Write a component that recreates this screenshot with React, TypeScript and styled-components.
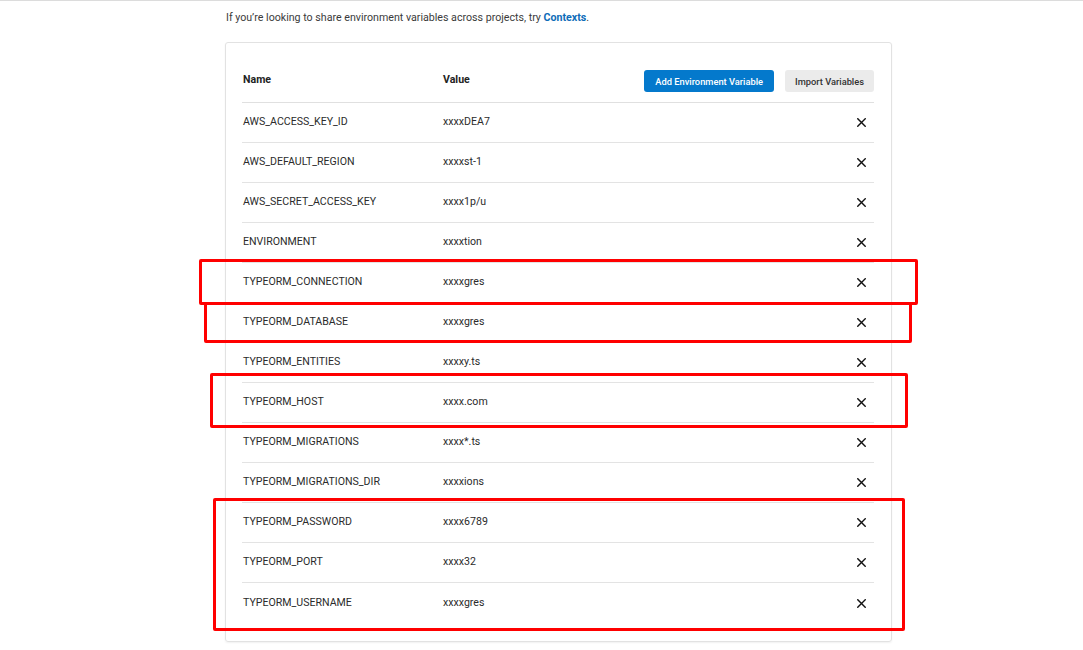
import React from "react";
import styled, { createGlobalStyle } from "styled-components";

const GlobalStyle = createGlobalStyle`
  html, body { margin: 0; padding: 0; background: #fff; }
  body { font-family: Roboto, "Liberation Sans", Arial, sans-serif; color: #333; }
  * { box-sizing: border-box; }
`;

const Page = styled.div`
  position: relative;
  width: 1083px;
  height: 650px;
  overflow: hidden;
  border-top: 1px solid #dcdcdc;
  padding-left: 225px;
`;

const Intro = styled.p`
  margin: 0;
  padding: 10px 0 0 1px;
  height: 41px;
  font-size: 10.65px;
  line-height: 14px;
  color: #3b3b3b;
`;

const Link = styled.a`
  color: #0e6cb8;
  font-weight: 700;
  text-decoration: none;
`;

const Card = styled.div`
  width: 667px;
  border: 1px solid #e2e2e2;
  border-radius: 3px;
  box-shadow: 0 1px 2px rgba(0, 0, 0, 0.06);
  padding: 27px 17px 18px 16px;
`;

const Table = styled.div`
  display: flex;
  flex-direction: column;
`;

const HeaderRow = styled.div`
  display: grid;
  grid-template-columns: 200px 1fr auto;
  align-items: center;
  height: 33px;
  padding-bottom: 11px;
  border-bottom: 1px solid #e0e0e0;
`;

const HeadCell = styled.div`
  padding-left: 1px;
  font-size: 10.6px;
  font-weight: 700;
  color: #222;
  margin-top: -4px;
`;

const Actions = styled.div`
  display: flex;
  gap: 11px;
`;

const Button = styled.button<{ $primary?: boolean }>`
  height: 22px;
  padding: 0 ${(p) => (p.$primary ? "11px" : "10px")};
  border: none;
  border-radius: 3px;
  font-family: Roboto, "Liberation Sans", Arial, sans-serif;
  font-size: 9.3px;
  font-weight: 500;
  background: ${(p) => (p.$primary ? "#0479cc" : "#ebebeb")};
  color: ${(p) => (p.$primary ? "#fff" : "#333")};
  cursor: pointer;
`;

const Row = styled.div<{ $last?: boolean }>`
  display: grid;
  grid-template-columns: 200px 1fr 24px;
  align-items: center;
  height: 40px;
  border-bottom: ${(p) => (p.$last ? "none" : "1px solid #e3e3e3")};
`;

const Cell = styled.div`
  padding-left: 1px;
  padding-bottom: 2px;
  font-size: 10.6px;
  color: #2b2b2b;
`;

const Remove = styled.div`
  display: flex;
  justify-content: center;
  align-items: center;
  padding-top: 0;
  padding-right: 1px;
`;

const Mark = styled.div`
  position: absolute;
  border: 3px solid #ff0000;
  border-radius: 2px;
  pointer-events: none;
`;

const rows: [string, string][] = [
  ["AWS_ACCESS_KEY_ID", "xxxxDEA7"],
  ["AWS_DEFAULT_REGION", "xxxxst-1"],
  ["AWS_SECRET_ACCESS_KEY", "xxxx1p/u"],
  ["ENVIRONMENT", "xxxxtion"],
  ["TYPEORM_CONNECTION", "xxxxgres"],
  ["TYPEORM_DATABASE", "xxxxgres"],
  ["TYPEORM_ENTITIES", "xxxxy.ts"],
  ["TYPEORM_HOST", "xxxx.com"],
  ["TYPEORM_MIGRATIONS", "xxxx*.ts"],
  ["TYPEORM_MIGRATIONS_DIR", "xxxxions"],
  ["TYPEORM_PASSWORD", "xxxx6789"],
  ["TYPEORM_PORT", "xxxx32"],
  ["TYPEORM_USERNAME", "xxxxgres"],
];

const marks = [
  { left: 199, top: 258, width: 719, height: 46 },
  { left: 204, top: 301, width: 708, height: 41 },
  { left: 210, top: 372, width: 698, height: 55 },
  { left: 213, top: 497, width: 692, height: 133 },
];

const CloseIcon = () => (
  <svg width="9" height="9" viewBox="0 0 9 9">
    <path d="M0.8 0.8 L8.2 8.2 M8.2 0.8 L0.8 8.2" stroke="#111" strokeWidth="1.4" strokeLinecap="square" />
  </svg>
);

export default function App() {
  return (
    <>
      <GlobalStyle />
      <Page>
        <Intro>
          If you’re looking to share environment variables across projects, try{" "}
          <Link href="#">Contexts</Link>.
        </Intro>
        <Card>
          <Table>
            <HeaderRow>
              <HeadCell>Name</HeadCell>
              <HeadCell>Value</HeadCell>
              <Actions>
                <Button $primary>Add Environment Variable</Button>
                <Button>Import Variables</Button>
              </Actions>
            </HeaderRow>
            {rows.map(([name, value], i) => (
              <Row key={name} $last={i === rows.length - 1}>
                <Cell>{name}</Cell>
                <Cell>{value}</Cell>
                <Remove>
                  <CloseIcon />
                </Remove>
              </Row>
            ))}
          </Table>
        </Card>
        {marks.map((m, i) => (
          <Mark
            key={i}
            style={{ left: m.left, top: m.top, width: m.width, height: m.height }}
          />
        ))}
      </Page>
    </>
  );
}
